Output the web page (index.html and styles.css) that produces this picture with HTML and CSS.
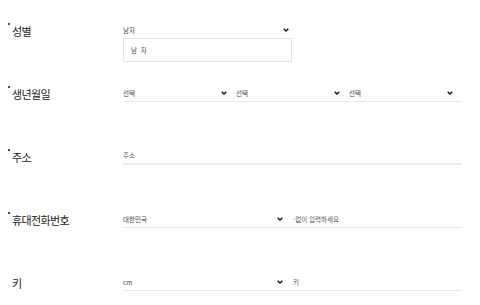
FILE: index.html
```html
<!DOCTYPE html>
<html lang="ko">
<head>
  <meta charset="UTF-8" />
  <meta name="viewport" content="width=device-width, initial-scale=1.0" />
  <title>회원 정보</title>
  <link rel="stylesheet" href="styles.css">
</head>
<body>
  <div class="form">
    <div class="row">
      <div class="label required">성별</div>
      <div class="field field-narrow">
        <div class="select plain">
          <span>남자</span>
          <svg class="chev" width="6" height="4" viewBox="0 0 6 4"><polyline points="0.7,0.7 3,3 5.3,0.7" /></svg>
        </div>
        <div class="box">남 자</div>
      </div>
    </div>

    <div class="row">
      <div class="label required">생년월일</div>
      <div class="field">
        <div class="line">
          <div class="select third">
            <span>선택</span>
            <svg class="chev" width="6" height="4" viewBox="0 0 6 4"><polyline points="0.7,0.7 3,3 5.3,0.7" /></svg>
          </div>
          <div class="select third">
            <span>선택</span>
            <svg class="chev" width="6" height="4" viewBox="0 0 6 4"><polyline points="0.7,0.7 3,3 5.3,0.7" /></svg>
          </div>
          <div class="select third">
            <span>선택</span>
            <svg class="chev" width="6" height="4" viewBox="0 0 6 4"><polyline points="0.7,0.7 3,3 5.3,0.7" /></svg>
          </div>
        </div>
      </div>
    </div>

    <div class="row">
      <div class="label required">주소</div>
      <div class="field">
        <div class="line thick">
          <span class="value">주소</span>
        </div>
      </div>
    </div>

    <div class="row">
      <div class="label required">휴대전화번호</div>
      <div class="field">
        <div class="line">
          <div class="select half">
            <span>대한민국</span>
            <svg class="chev" width="6" height="4" viewBox="0 0 6 4"><polyline points="0.7,0.7 3,3 5.3,0.7" /></svg>
          </div>
          <span class="placeholder">-없이 입력하세요</span>
        </div>
      </div>
    </div>

    <div class="row last">
      <div class="label">키</div>
      <div class="field">
        <div class="line">
          <div class="select half">
            <span>cm</span>
            <svg class="chev" width="6" height="4" viewBox="0 0 6 4"><polyline points="0.7,0.7 3,3 5.3,0.7" /></svg>
          </div>
          <span class="placeholder">키</span>
        </div>
      </div>
    </div>
  </div>
</body>
</html>
```

FILE: styles.css
```css
body {
    margin: 0;
    background: #ffffff;
    font-family: "Noto Sans CJK KR", "Noto Sans", sans-serif;
    color: #222;
}
.form {
    padding-top: 21px;
}
.row {
    display: flex;
    min-height: 63px;
}
.row.last {
    min-height: 0;
}
.label {
    width: 123px;
    flex-shrink: 0;
    padding-left: 12px;
    box-sizing: border-box;
    font-size: 11px;
    line-height: 17px;
    padding-top: 2px;
    color: #222;
    position: relative;
    letter-spacing: -0.6px;
}
.required::before {
    content: "";
    position: absolute;
    left: 8px;
    top: 2px;
    width: 2px;
    height: 2px;
    border-radius: 1px;
    background: #111;
}
.field {
    width: 339px;
}
.field-narrow {
    width: 169px;
}
.select {
    display: flex;
    align-items: center;
    justify-content: space-between;
    height: 17px;
    font-size: 6.5px;
    color: #444;
    box-sizing: border-box;
    padding-right: 3px;
}
.chev {
    fill: none;
    stroke: #111;
    stroke-width: 1.4;
}
.box {
    height: 24px;
    border: 1px solid #e4e4e4;
    box-sizing: border-box;
    padding-left: 7px;
    font-size: 6.5px;
    line-height: 22px;
    color: #444;
    letter-spacing: 1px;
}
.line {
    display: flex;
    align-items: center;
    gap: 6px;
    height: 17px;
    border-bottom: 1px solid #e8e8e8;
}
.line.thick {
    height: 16px;
    border-bottom: 2px solid #ececec;
}
.third {
    width: 107px;
}
.half {
    width: 163px;
}
.value {
    font-size: 6.5px;
    color: #555;
}
.placeholder {
    font-size: 6.5px;
    color: #555;
    margin-left: 1px;
}
```
